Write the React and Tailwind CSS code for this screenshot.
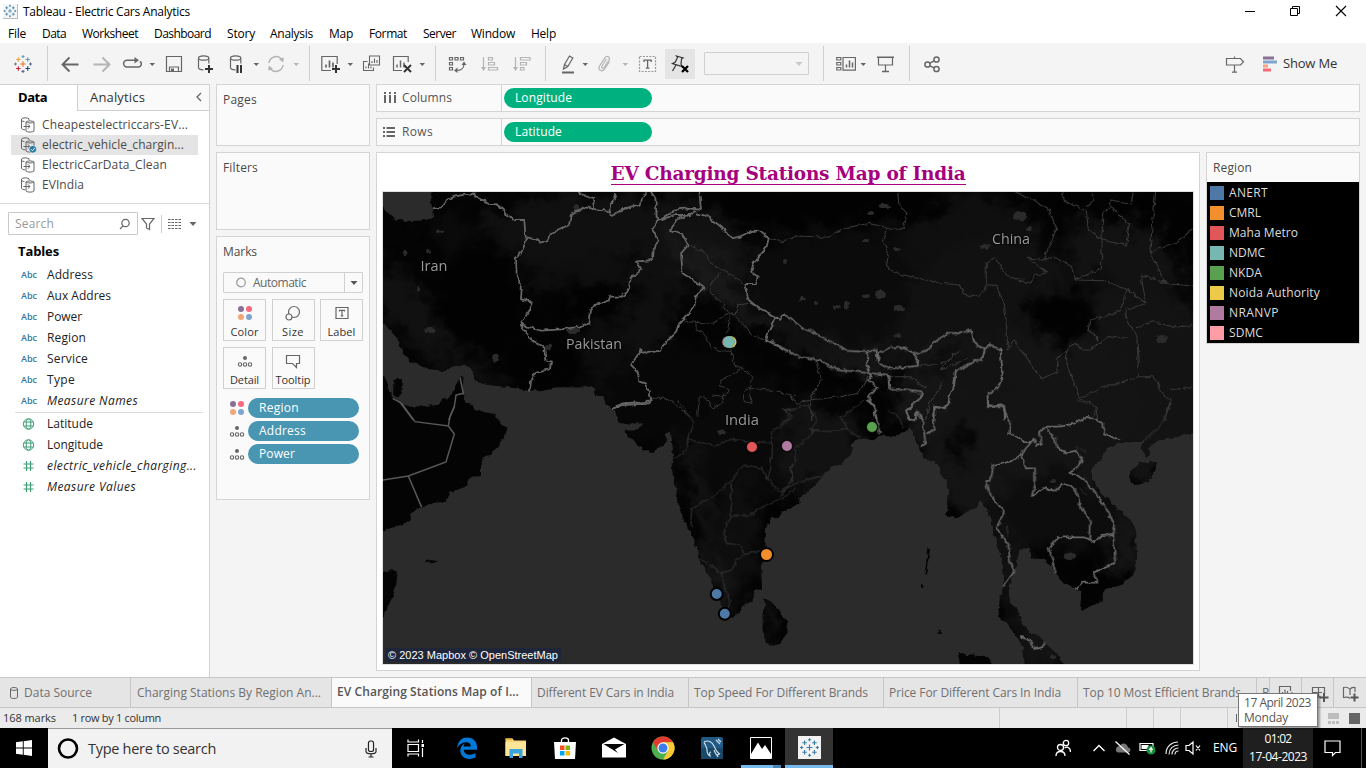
import React, { useLayoutEffect, useRef } from "react";

/* Single-line label that spreads its letters over a given width. */
function T({ w, className = "", children }) {
  const ref = useRef(null);
  useLayoutEffect(() => {
    const el = ref.current;
    el.style.letterSpacing = "0px";
    const natural = el.getBoundingClientRect().width;
    el.style.letterSpacing = (w - natural) / el.textContent.length + "px";
  }, [w, children]);
  return (
    <span ref={ref} className={"inline-block shrink-0 whitespace-pre " + className}>
      {children}
    </span>
  );
}

function Svg({ w = 20, h = 20, className = "", children, ...rest }) {
  return (
    <svg width={w} height={h} viewBox={`0 0 ${w} ${h}`} fill="none" stroke="#666" strokeWidth="1.2" className={"shrink-0 " + className} {...rest}>
      {children}
    </svg>
  );
}

const Caret = ({ className = "", color = "#666" }) => (
  <Svg w={8} h={20} className={className}>
    <path d="M1.500 9h5.500L4.250 12z" fill={color} stroke="none" />
  </Svg>
);
const Sep = ({ className = "" }) => <div className={"h-[35px] w-px shrink-0 bg-[#d0d0d0] " + className} />;

const plus = (x, y, r) => `M${x - r} ${y}h${2 * r}M${x} ${y - r}v${2 * r}`;

function TableauLogo({ s = 20, mono = false, className = "" }) {
  const c = (v) => (mono ? "#3d7fa8" : v);
  return (
    <svg width={s} height={s} viewBox="0 0 20 20" fill="none" strokeWidth="1.1" className={"shrink-0 " + className}>
      <path d={plus(10, 10, 2.8)} stroke={c("#e8762c")} />
      <path d={plus(5.3, 5.5, 2.2)} stroke={c("#e8a04c")} />
      <path d={plus(14.7, 5.5, 2.2)} stroke={c("#7199a6")} />
      <path d={plus(5.3, 14.5, 2.2)} stroke={c("#c72035")} />
      <path d={plus(14.7, 14.5, 2.2)} stroke={c("#1f457e")} />
      <path d={plus(10, 2.6, 1.5)} stroke={c("#6f9fc4")} />
      <path d={plus(10, 17.4, 1.5)} stroke={c("#5b6591")} />
      <path d={plus(2.5, 10, 1.5)} stroke={c("#59879b")} />
      <path d={plus(17.5, 10, 1.5)} stroke={c("#5b6591")} />
    </svg>
  );
}

function TitleBar() {
  return (
    <div className="flex h-[23px] items-center bg-white text-[12px] text-black">
      <div className="ml-[3px] flex h-[15px] w-[15px] items-center justify-center border-r border-b border-[#bbb] bg-[#f6f6f6]">
        <TableauLogo s={14} mono />
      </div>
      <T w={167} className="ml-[5px]">Tableau - Electric Cars Analytics</T>
      <div className="ml-auto flex items-center pr-[19px]">
        <Svg w={11} h={20}><path d="M0 9.500h10" stroke="#000" strokeWidth="1" /></Svg>
        <Svg w={12} h={20} className="ml-[34px]"><path d="M.5 6.500h7v7h-7zM2.500 6.500v-2h7v7h-2" stroke="#000" strokeWidth="1" /></Svg>
        <Svg w={12} h={20} className="ml-[33px]"><path d="M1 4l10 10M11 4L1 14" stroke="#000" strokeWidth="1.1" /></Svg>
      </div>
    </div>
  );
}

function MenuBar() {
  return (
    <div className="flex h-[20px] items-center bg-white pt-[2px] pl-[8px] text-[12px] text-black">
      <T w={18}>File</T>
      <T w={24} className="ml-[16px]">Data</T>
      <T w={56} className="ml-[16px]">Worksheet</T>
      <T w={57} className="ml-[16px]">Dashboard</T>
      <T w={28} className="ml-[16px]">Story</T>
      <T w={43} className="ml-[15px]">Analysis</T>
      <T w={24} className="ml-[16px]">Map</T>
      <T w={38} className="ml-[16px]">Format</T>
      <T w={33} className="ml-[16px]">Server</T>
      <T w={44} className="ml-[15px]">Window</T>
      <T w={25} className="ml-[16px]">Help</T>
    </div>
  );
}

const bars = "M6 13.500v-3M9.500 13.500v-7M13 13.500v-5";
const Cyl = () => <path d="M2.500 4v9.500c0 1.300 2.300 2.300 5 2.300M12.800 4v5.500M2.500 4c0-1.300 2.300-2.200 5.100-2.200s5.200.9 5.200 2.200-2.300 2.200-5.200 2.200S2.500 5.300 2.500 4z" />;

function Toolbar() {
  return (
    <div className="flex h-[41px] items-center bg-[#f4f4f4] pl-[13px]">
      <TableauLogo />
      <Sep className="ml-[14px]" />
      <Svg className="ml-[12px]" strokeWidth="1.900"><path d="M2.500 10.500h16M9.500 3.500l-7 7 7 7" /></Svg>
      <Svg className="ml-[12px]" stroke="#b4b4b4" strokeWidth="1.900"><path d="M1.500 10.500h16M10.500 3.500l7 7-7 7" /></Svg>
      <Svg className="ml-[10px]" strokeWidth="1.500"><path d="M9 13H5a3.400 3.400 0 010-6.800h9M8 13h8.500a3 3 0 001.500-5.500" /><path d="M12.500 3l4.500 3.200-4.500 3.200z" fill="#666" stroke="none" /></Svg>
      <Caret className="ml-[6px]" />
      <Svg className="ml-[8px]"><path d="M2.500 2.500h15v15h-15zM5.500 17.500v-4.500h9v4.500" /><path d="M7 14.500h3v3H7z" fill="#666" stroke="none" /></Svg>
      <Svg className="ml-[12px]"><Cyl /><path d="M13 11v8M9 15h8" stroke="#333" strokeWidth="2" /></Svg>
      <Svg className="ml-[10px]"><g transform="translate(2 0)"><Cyl /></g><path d="M11.500 11v8M15 11v8" stroke="#333" strokeWidth="2" /></Svg>
      <Caret className="ml-[6px]" />
      <Svg className="ml-[6px]" stroke="#b4b4b4" strokeWidth="1.500"><path d="M3 9a7.200 7.200 0 0112.500-4M17 11a7.200 7.200 0 01-12.500 4" /><path d="M17 8.500l1-5-5 1.500zM3 11.500l-1 5 5-1.500z" fill="#b4b4b4" stroke="none" /></Svg>
      <Caret className="ml-[6px]" color="#b4b4b4" />
      <Sep className="ml-[9px]" />
      <Svg className="ml-[11px]"><path d="M10 16.500H.8v-14h15.400V10" /><path d={bars} transform="translate(-1 0)" strokeWidth="1.700" /><path d="M15 11v8M11 15h8" stroke="#333" strokeWidth="2" /></Svg>
      <Caret className="ml-[5px]" />
      <Svg className="ml-[8px]" strokeWidth="1.100"><path d="M7.500 2h10v9h-10zM10 9V7M12.500 9V4.500M15 9V6M5.500 7.500H1.500v9h10v-3M4 14.500v-2M6.500 14.500v-5M9 14.500v-2" /></Svg>
      <Svg className="ml-[10px]"><path d="M10 16.500H1.500v-14h14.700V8" /><path d={bars} transform="translate(-1 0)" strokeWidth="1.500" /><path d="M12 11l7 7M19 11l-7 7" stroke="#333" strokeWidth="2" /></Svg>
      <Caret className="ml-[6px]" />
      <Sep className="ml-[9px]" />
      <Svg className="ml-[11px]"><path d="M2.500 3.500h3v2.500h-3zM8 3.500h3v2.500H8zM13.500 3.500h3v2.500h-3zM2.500 8.500h3v2.500h-3zM2.500 13.500h3v2.500h-3zM17 10c0 4-3 6.500-7.500 6.500" /><path d="M14.500 11l2.500-3.500 2.500 3.500zM10.500 13.500l-3.500 3 3.500 2.500z" fill="#666" stroke="none" /></Svg>
      <Svg className="ml-[13px]" stroke="#b4b4b4"><path d="M3.500 3v12M8.500 3.500h4v2.500h-4zM8.500 8.500h6v2.500h-6zM8.500 13.500h9V16h-9z" /><path d="M1 13l2.500 4L6 13z" fill="#b4b4b4" stroke="none" /></Svg>
      <Svg className="ml-[12px]" stroke="#b4b4b4"><path d="M3.500 3v12M8.500 3.500h9.500v2.500H8.500zM8.500 8.500h6v2.500h-6zM8.500 13.500h3.500V16H8.500z" /><path d="M1 13l2.500 4L6 13z" fill="#b4b4b4" stroke="none" /></Svg>
      <Sep className="ml-[13px]" />
      <Svg className="ml-[12px]"><path d="M5.500 15l1-4.500 5-8.500 3.300 2-5 8.500zM6.500 10.500l3.500 2M5.500 15l4.300-2.500" /><path d="M4 18.500h12" strokeWidth="2" /></Svg>
      <Caret className="ml-[3px]" />
      <Svg className="ml-[6px]" stroke="#b4b4b4"><path d="M11.500 5L7 12c-1.200 2.200 1 3 2 1.500L14 6c1.600-3-2-5-4-2.300L4.500 12c-2 4 2.500 6.500 5 3.200L14.500 7.500" /></Svg>
      <Caret className="ml-[6px]" color="#b4b4b4" />
      <Svg className="ml-[9px]"><path d="M1.500 2.500h16v15h-16z" stroke="#999" strokeDasharray="2 1.300" /><path d="M6 8V6.200h7.200V8M9.600 6.200v8M7.800 14.200h3.600" strokeWidth="1.300" /></Svg>
      <div className="ml-[7px] flex h-[30px] w-[30px] shrink-0 items-center justify-center bg-[#e4e4e4]">
        <Svg><path d="M6.500 2l6.500 2-1.500 1-.5 5 1 2.500-9.500-3 2.800-1.500L7.500 3.500zM6 11l-3.500 6" stroke="#333" /><path d="M12 12l6 6M18 12l-6 6" stroke="#000" strokeWidth="2.300" /></Svg>
      </div>
      <div className="ml-[9px] flex h-[23px] w-[105px] shrink-0 items-center justify-end rounded-[1px] border border-[#d0d0d0] pr-[5px]">
        <Svg w={8} h={20}><path d="M.5 8h7L4 12z" fill="#c8c8c8" stroke="none" /></Svg>
      </div>
      <Sep className="ml-[14px]" />
      <Svg className="ml-[12px]"><path d="M.8 3.500h4V6h-4zM.8 8.500h4V11h-4zM.8 13.500h4V16h-4zM7 3.500h12.400v12.700H7z" /><path d="M10.500 13.500v-3M13.500 13.500v-7M16.500 13.500v-5" strokeWidth="1.500" /></Svg>
      <Caret className="ml-[3px]" />
      <Svg className="ml-[9px]"><path d="M2.500 3v8h14V3M9.500 11v6.500" /><path d="M1 3.200h17M6 17.500h7" strokeWidth="1.600" /></Svg>
      <Sep className="ml-[13px]" />
      <Svg className="ml-[12px]" strokeWidth="1.500"><circle cx="5.500" cy="10.500" r="2.600" /><circle cx="14.500" cy="5.500" r="2.600" /><circle cx="14.500" cy="15" r="2.600" /><path d="M8 9.200l4-2.300M8 11.800l4 2" /></Svg>
      <Svg className="ml-[283px]"><path d="M1.500 4.500h14l3 3.300-3 3.200h-14zM9.500 2.500v2M9.500 11v7.500M7 18.200h5" /></Svg>
      <Svg w={16} className="ml-[18px]" stroke="none"><path d="M0 2.500h11v3H0z" fill="#8b7096" /><path d="M0 6.500h14v3H0z" fill="#7fa5cf" /><path d="M0 10.500h5v3H0z" fill="#f2a57a" /><path d="M0 14.500h8v3H0z" fill="#f5697b" /></Svg>
      <T w={54} className="ml-[4px] text-[13px] text-[#333]">Show Me</T>
    </div>
  );
}

const DataIcon = ({ on }) => (
  <Svg w={17} h={18} strokeWidth="1" className="mr-[5px]">
    <path d="M9 4V2.800C7.500 1.500 2.500 1.500 1.500 3v9.500c1 1 2 1.200 3.500 1.300M1.500 4.500c1 .8 2 1 3 1.100M6 6v9c1.500 1.500 6.500 1.500 8 0V6c-1.500 1.300-6.500 1.300-8 0 1.500-1.500 6.500-1.500 8 0M3.500 10.500h6.500M7.800 8.300l2.200 2.200-2.200 2.200" />
    {on && <g><circle cx="12.800" cy="13.300" r="3.800" fill="#2a7ba3" stroke="#fff" strokeWidth=".6" /><path d="M11 13.300l1.400 1.400 2.400-2.600" stroke="#fff" /></g>}
  </Svg>
);

const Field = ({ icon, w, italic, children }) => (
  <div className={"flex h-[21px] items-center text-[12px] text-[#222] " + (italic ? "italic" : "")}>
    <div className="flex w-[29px] shrink-0 items-center pl-[3px]">{icon}</div>
    <T w={w}>{children}</T>
  </div>
);
const Abc = () => <T w={16} className="text-[9px] font-semibold text-[#35789c] not-italic">Abc</T>;
const Globe = () => <Svg w={16} h={12} stroke="#3f9e77" strokeWidth="1"><ellipse cx="7.500" cy="6" rx="5.200" ry="5.200" /><ellipse cx="7.500" cy="6" rx="2.300" ry="5.200" /><path d="M3 4h9M3 8h9" /></Svg>;
const Hash = () => <Svg w={16} h={12} stroke="#3f9e77"><path d="M5.500 1v10M9.500 1v10M2.500 4h10M2.500 8h10" /></Svg>;

function DataPane() {
  return (
    <div className="flex w-[210px] shrink-0 flex-col border-t border-r border-[#d0d0d0] bg-white">
      <div className="flex h-[26px] shrink-0 text-[13px]">
        <div className="w-[77px] shrink-0 pt-[3px] pl-[18px] font-bold text-black"><T w={29}>Data</T></div>
        <div className="flex flex-1 items-center justify-between border-b border-l border-[#d0d0d0] bg-[#fafafa] pr-[6px] pl-[12px] text-[#333]">
          <T w={55}>Analytics</T>
          <Svg w={8} h={12}><path d="M6 1L2 5l4 4" strokeWidth="1.300" /></Svg>
        </div>
      </div>
      <div className="mt-[4px] h-[89px] shrink-0 border-b border-[#dcdcdc] text-[12px] text-[#4a4a4a]">
        <div className="flex h-[20px] items-center pl-[20px]"><DataIcon /><T w={146}>Cheapestelectriccars-EV...</T></div>
        <div className="ml-[11px] flex h-[20px] w-[187px] items-center bg-[#e4e4e4] pl-[9px]"><DataIcon on /><T w={142}>electric_vehicle_chargin...</T></div>
        <div className="flex h-[20px] items-center pl-[20px]"><DataIcon /><T w={125}>ElectricCarData_Clean</T></div>
        <div className="flex h-[20px] items-center pl-[20px]"><DataIcon /><T w={42}>EVIndia</T></div>
      </div>
      <div className="mt-[8px] flex shrink-0 items-center pl-[8px]">
        <div className="flex h-[23px] w-[130px] items-center justify-between rounded-[1px] border border-[#c8c8c8] pr-[6px] pl-[6px] text-[12px] text-[#999]">
          <T w={39}>Search</T>
          <Svg w={12} h={12}><circle cx="6.500" cy="5" r="3.700" /><path d="M4 7.800L1 11" /></Svg>
        </div>
        <Svg w={14} h={14} className="ml-[3px]"><path d="M1 1.500h12L8.500 7v5.500l-3-1.500V7z" /></Svg>
        <div className="ml-[6px] h-[18px] w-px bg-[#ccc]" />
        <Svg w={13} h={12} className="ml-[6px]"><path d="M0 1.500h13M0 4.500h13M0 7.500h13M0 10.500h13" strokeDasharray="2.500 1" /></Svg>
        <Svg w={8} h={10} className="ml-[8px]"><path d="M.5 3h7L4 7z" fill="#666" stroke="none" /></Svg>
      </div>
      <div className="mt-[6px] flex h-[22px] shrink-0 items-center pl-[18px] text-[13px] font-bold text-black"><T w={41}>Tables</T></div>
      <div className="mt-[1px] pl-[18px]">
        <Field icon={<Abc />} w={46}>Address</Field>
        <Field icon={<Abc />} w={64}>Aux Addres</Field>
        <Field icon={<Abc />} w={35}>Power</Field>
        <Field icon={<Abc />} w={39}>Region</Field>
        <Field icon={<Abc />} w={41}>Service</Field>
        <Field icon={<Abc />} w={28}>Type</Field>
        <Field icon={<Abc />} w={91} italic>Measure Names</Field>
      </div>
      <div className="mt-px mr-[6px] ml-[15px] h-px shrink-0 bg-[#dcdcdc]" />
      <div className="pl-[18px]">
        <Field icon={<Globe />} w={46}>Latitude</Field>
        <Field icon={<Globe />} w={56}>Longitude</Field>
        <Field icon={<Hash />} w={150} italic>electric_vehicle_charging...</Field>
        <Field icon={<Hash />} w={89} italic>Measure Values</Field>
      </div>
    </div>
  );
}

const ColorDots = ({ className = "" }) => (
  <Svg w={16} h={16} stroke="none" className={className}><circle cx="4" cy="4" r="3" fill="#8b7096" /><circle cx="12" cy="4" r="3" fill="#f8697b" /><circle cx="4" cy="12" r="3" fill="#f2a57a" /><circle cx="12" cy="12" r="3" fill="#7fa5cf" /></Svg>
);
const DetailDots = ({ className = "" }) => (
  <Svg w={16} h={16} strokeWidth="1.100" className={className}><circle cx="8" cy="5" r="2" fill="#666" stroke="none" /><circle cx="3" cy="11.500" r="1.700" /><circle cx="8" cy="11.500" r="1.700" /><circle cx="13" cy="11.500" r="1.700" /></Svg>
);
const MarkButton = ({ icon, w, children }) => (
  <div className="flex h-[42px] w-[43px] flex-col items-center justify-between border border-[#d0d0d0] pt-[5px] text-[11px] leading-[16px] text-[#333]">
    {icon}
    <T w={w}>{children}</T>
  </div>
);
const Pill = ({ icon, w, children }) => (
  <div className="flex h-[20px] items-center">
    {icon}
    <div className="ml-[3px] flex h-[20px] w-[111px] items-center rounded-full bg-[#4996b2] pl-[11px] text-[12px] text-white"><T w={w}>{children}</T></div>
  </div>
);

function Cards() {
  const card = "border border-[#d4d4d4] bg-[#fafafa] pl-[6px] text-[12px] text-[#4a4a4a] ";
  return (
    <div className="ml-[6px] flex w-[154px] shrink-0 flex-col gap-[6px]">
      <div className={card + "h-[62px] pt-[6px]"}><T w={34}>Pages</T></div>
      <div className={card + "h-[78px] pt-[6px]"}><T w={35}>Filters</T></div>
      <div className={card + "h-[264px] pt-[6px]"}>
        <T w={34}>Marks</T>
        <div className="mt-[11px] flex h-[21px] w-[140px] items-center rounded-[1px] border border-[#d0d0d0] pl-[12px] text-[12px] text-[#666]">
          <Svg w={11} h={11}><circle cx="5" cy="5.500" r="4.300" stroke="#999" /></Svg>
          <T w={53} className="ml-[6px]">Automatic</T>
          <div className="ml-auto flex h-full w-[18px] items-center justify-center border-l border-[#d0d0d0]"><Svg w={8} h={8}><path d="M.5 2h7L4 6z" fill="#555" stroke="none" /></Svg></div>
        </div>
        <div className="mt-[6px] grid w-[140px] grid-cols-[43px_43px_43px] gap-x-[5.500px] gap-y-[6px]">
          <MarkButton icon={<ColorDots />} w={28}>Color</MarkButton>
          <MarkButton icon={<Svg w={16} h={16}><circle cx="9" cy="7" r="5.500" /><circle cx="4" cy="12" r="3" fill="#fafafa" /></Svg>} w={22}>Size</MarkButton>
          <MarkButton icon={<Svg w={16} h={16}><path d="M2 2.500h12v11H2z" /><path d="M5.500 6.500V5.300h5v1.200M8 5.300v5.500M6.700 10.800h2.600" /></Svg>} w={28}>Label</MarkButton>
          <MarkButton icon={<DetailDots />} w={29}>Detail</MarkButton>
          <MarkButton icon={<Svg w={16} h={16}><path d="M1.500 2.500h13v8h-3v4l-4-4h-6z" /></Svg>} w={35}>Tooltip</MarkButton>
        </div>
        <div className="mt-[9px] ml-[6px] flex flex-col gap-[3px]">
          <Pill icon={<ColorDots />} w={40}>Region</Pill>
          <Pill icon={<DetailDots />} w={47}>Address</Pill>
          <Pill icon={<DetailDots />} w={36}>Power</Pill>
        </div>
      </div>
    </div>
  );
}

function Shelf({ icon, label, lw, pill, pw }) {
  return (
    <div className="flex h-[28px] items-center border border-[#d4d4d4] bg-[#fafafa] text-[12px]">
      <div className="flex h-full w-[125px] shrink-0 items-center border-r border-[#d4d4d4] pl-[6px] text-[#555]">
        {icon}
        <T w={lw} className="ml-[5px]">{label}</T>
      </div>
      <div className="ml-[2px] flex h-[20px] w-[148px] items-center rounded-full bg-[#00b180] pl-[11px] text-white"><T w={pw}>{pill}</T></div>
    </div>
  );
}

const N = "translate(376 150) scale(.33333)";
const NE = "translate(780 150) scale(.37372 .33333)";
const SW = "translate(376 400) scale(.33333)";
const SE = "translate(780 400) scale(.33333)";

const BORDERS = [
  [N, "M170 178L185 176L200 165L215 148L235 140L265 134L280 137L295 130L300 142L325 152L345 160L360 163L380 176L385 188L405 200L415 210L445 210L448 255L450 262L480 268L495 278L515 270L522 250L550 240L580 225L585 190L612 182L620 170L645 176L690 182L707 195L735 182L765 170L790 165L800 140L812 126M600 126L625 135L655 145L650 176M715 126L720 140L702 165L700 190M825 126L838 145L842 200L850 212L900 178L940 175L975 180L970 126M845 212L900 195L940 195L960 182M960 190L985 195L1000 205L1025 222L1045 240L1070 265L1095 258L1130 242L1150 243L1178 265L1172 290L1150 315L1130 345L1125 365L1145 380L1140 402L1105 402M845 212L830 240L845 270L840 290L830 305L828 330L780 335L795 355L790 370L765 378L760 410L750 430L735 440L700 440L695 455L660 460L645 480L640 520L610 530L555 538L495 542L455 530L433 520M450 262L440 300L420 325L422 375L435 405L432 448L470 455L465 475L433 520L445 540L465 570L505 595L508 630L525 635L522 658L480 665L465 690L462 724M940 195L900 210L882 240L920 255L937 285L915 310L920 370L950 390L985 412L960 435L955 470L935 495L910 520L900 545L870 575L850 602L810 610L795 600L765 645L785 665L790 695L810 700L825 745L820 760L740 765L712 775M1105 402L1118 450L1150 475L1200 500L1180 540L1170 570L1200 585L1222 600M1200 500L1212 510"],
  [NE, "M0 510L10 493L30 505L60 535L85 545L110 560L130 572L160 590L175 602L235 606L258 600L262 640L295 655L330 652L368 648L370 628L358 612L395 600L415 575L450 548L480 550L510 540L515 570L530 585L548 598L560 582L590 600L597 690L580 715L555 735L557 770L600 768L602 810M0 590L50 620L110 630L130 650L180 662L240 670L232 635L235 606M262 635L265 608L290 595L315 590L345 600L358 612M548 598L540 630L525 630L470 665L465 710L440 775L412 770L413 810M240 670L290 675L292 715L345 722L380 728L375 745L350 770L338 785L350 810M240 670L245 685L235 690L262 715L235 740L250 765L258 810M360 810L362 785L378 790L380 810"],
  [SW, "M712 25L740 10L820 5"],
  [SE, "M262 0L282 15L290 60L300 100M415 0L380 30L385 55L400 65L412 35L430 75L436 130L420 140M508 0L495 28L465 20L462 85L440 105M620 0L630 22L665 15L690 65L688 98L720 118L745 128L760 118L770 135L785 130L780 95L800 80L840 80L885 70L920 50L970 70L972 100L1020 122M800 88L825 115L830 145L860 158L890 152L905 180L895 200L868 215L915 240L970 310L1005 375L1000 405L1006 490L940 518L952 548L910 548L885 567M760 118L722 165L690 185L640 198L632 240L615 245L630 285L660 320L672 340L650 385L685 435L690 485L703 515L668 562M722 165L738 205L765 205L765 255L755 288L795 262L822 272L845 250L875 258L895 290L900 320L930 360L928 415M1000 405L965 408L945 428L915 412L835 412L806 445L828 520M722 710L750 720L760 748L785 742L797 728"],
];

/* Surveyed straight-line borders of the Arabian peninsula. */
const STRAIGHT = [
  [N, "M50 745L72 757L112 810M218 810L235 770L240 735L262 730L252 682"],
  [SW, "M77 10L117 65L217 78L222 50L235 20M217 78L235 102L210 186L97 228L21 240M97 228L137 322"],
];

const PROVINCES = [
  [N, "M937 285L990 310L1010 345L1060 370L1105 402M1178 265L1215 272M1030 370L1000 405L1005 430L1040 460L1060 490L1080 495L1085 465L1120 460M925 515L960 517L1010 520L1040 500L1055 490M960 520L960 540L985 550L1005 590L1030 605L1065 600L1075 645L1100 655L1040 690L1030 705L1060 720L1050 740L1010 735M1100 655L1130 680L1125 710L1100 730L1105 755L1125 760L1120 715L1200 722L1260 740M1060 490L1055 550M1080 500L1130 555L1165 570M825 745L870 745L905 770L950 808M965 800L970 740L1000 750L1005 775L1040 760L1045 730"],
  [NE, "M315 126L318 160L340 190L330 235L285 235L240 220L200 228L165 235L130 262L45 258L0 278M285 235L275 270L290 310L285 350L310 370L370 385L430 400L480 405L490 430L520 440L550 425L552 400L580 410L600 460L608 550L608 600L625 570L660 625L700 685L740 670L745 620L790 580L810 600L830 600L880 560L930 565M552 400L552 340L575 325L590 350L610 380L670 400L685 375L718 368L665 325L705 328L740 235L720 180L680 150L630 126M705 328L740 320L780 350L790 390L860 355L862 270L825 240L820 185L790 168L760 150L755 126M820 170L840 150L835 126M862 270L925 285L935 220L905 195L885 170L860 190L865 230L858 270M885 170L885 150L940 160L945 126M1005 126L990 300L1030 400L1070 405L1105 408M990 305L1060 280L1105 235M790 390L870 392L930 420L980 460L925 480L930 515L955 560L960 680L870 710L800 745L845 770L850 810M770 600L765 640L795 720L800 745M960 680L1000 680L1030 740L1045 750L1030 810M1045 720L1105 710M930 415L910 480L870 500L830 510L822 540L850 560L850 575M955 530L1000 515L1050 530L1105 528M980 460L965 375L1030 395M95 630L110 690L78 750L160 740L210 730L235 680M0 720L50 760L80 750L85 810M290 680L350 680L390 715M370 648L430 640L480 605M435 700L400 760L390 810M465 610L430 660L500 625"],
  [SW, "M905 0L952 65L935 115L960 125L1020 138L1065 118L1130 125L1185 128L1190 95L1240 55L1225 30L1260 28M935 115L930 150L895 178M1185 128L1185 200L1175 238L1210 275L1250 245L1245 190M948 325L1000 295L1060 250L1080 225L1105 195L1160 205L1175 238M945 385L945 350L948 325M1065 250L1065 350L1120 345L1180 310L1230 290L1260 262M1065 350L1045 385L1050 430L1090 435L1105 460L1165 455M1105 465L1080 480L1070 510L1035 518L970 475M1035 518L1045 560L1062 600L1055 640"],
  [SE, "M1175 0L1150 60L1120 100L1085 125M890 0L945 18L945 45L920 55M0 85L35 50L15 30L85 15L110 60L90 110L45 145L50 190L30 200L38 240L0 290M90 90L150 95L200 85L240 115M180 50L215 30L255 0M180 50L205 90M0 275L60 245L130 225M325 30L360 55L370 85M890 140L920 155M900 265L920 285M680 380L685 410"],
];

const LAND = [
  [N, "M21 515L45 545L60 560L75 590L85 615L110 640L135 645L160 660L200 665L230 650L265 640L285 655L292 680L300 695L340 705L400 712L460 722L500 720L540 712L580 712L620 712L650 706L660 735L690 745L695 765L715 775L728 820L1260 820L1260 120L15 120L15 515Z M15 670L30 690L48 740L75 760L95 772L150 768L190 765L220 745L235 715L250 680L262 680L260 730L275 770L290 785L340 795L355 820L15 820Z M52 690L65 680L78 692L76 730L65 745L52 735Z"],
  [NE, "M-40 120H1120V820H-40Z"],
  [SW, "M15 0L50 0L75 12L110 22L150 18L185 14L200 -5L262 -5L290 22L320 35L355 42L375 70L393 88L385 115L365 140L345 165L325 168L315 200L315 228L280 232L268 260L240 272L222 275L210 305L175 308L140 322L105 340L100 362L60 380L15 394Z M15 525L45 508L66 512L60 560L50 590L35 620L15 655Z M148 484L165 480L186 484L168 490Z M684 -5L690 12L715 25L728 28L730 50L760 70L790 65L805 55L800 75L775 92L745 92L770 120L800 150L825 155L850 145L868 125L870 100L885 95L888 125L895 175L887 190L892 240L905 290L915 340L935 380L950 410L962 450L970 480L990 510L1010 550L1028 600L1045 640L1070 655L1090 640L1095 620L1125 605L1138 570L1158 568L1155 500L1160 485L1180 465L1168 440L1170 390L1185 355L1210 350L1215 335L1250 320L1270 310V-5Z M1160 592L1185 605L1210 630L1232 665L1235 700L1215 730L1185 738L1170 725L1160 690L1160 640L1172 610Z"],
  [SE, "M-20 -10L-20 335L35 325L40 305L80 280L100 260L130 225L150 205L185 190L215 160L220 125L250 115L280 118L300 105L330 110L375 100L385 80L400 95L410 130L420 150L440 180L475 190L480 215L495 235L508 270L500 345L525 355L550 345L570 330L592 320L597 298L615 320L630 350L640 400L655 440L665 480L668 520L672 560L660 590L655 650L680 670L710 710L730 740L735 800L850 800L840 770L800 735L775 705L745 700L725 670L710 625L690 610L685 570L700 520L712 480L718 445L750 445L755 475L790 478L815 495L830 525L850 550L875 562L905 575L900 632L940 615L965 600L975 570L1010 560L1060 525L1070 470L1068 400L1050 360L1000 315L960 275L935 235L935 205L960 180L975 150L1020 125L1060 125L1090 120L1085 150L1100 170L1110 165L1105 145L1120 130L1150 118L1200 108L1250 95V-10Z M1050 215L1080 190L1110 185L1135 188L1120 220L1105 245L1075 255L1052 245Z M535 755L560 765L600 768L625 775L638 800L545 800Z M445 445L450 447L444 485L438 525L434 520L440 480Z M426 552h6v8h-6zM476 692h6v10h-6z"],
];

/* x, y, rx, ry, rotation, fill */
const RELIEF = [
  [560, 235, 100, 40, -10, "#101010"], [590, 285, 60, 25, 0, "#0e0e0e"], [480, 250, 60, 20, 30, "#0a0a0a"], [445, 345, 70, 22, 35, "#0f0f0f"], [400, 300, 50, 20, 50, "#111111"],
  [610, 345, 35, 60, 10, "#0d0d0d"], [655, 290, 26, 70, 15, "#0f0f0f"], [700, 240, 60, 34, 30, "#111111"], [715, 280, 60, 16, 42, "#191919"], [790, 330, 110, 14, 27, "#181818"],
  [690, 400, 90, 55, 0, "#070707"], [760, 440, 70, 60, 0, "#090909"], [860, 345, 90, 16, 8, "#131313"], [880, 280, 140, 65, 0, "#0b0b0b"], [970, 235, 70, 45, 0, "#0f0f0f"],
  [1000, 330, 100, 90, 10, "#111111"], [1120, 380, 110, 90, 0, "#131313"], [1050, 400, 90, 70, 0, "#141414"], [960, 420, 50, 90, 5, "#131313"], [925, 390, 24, 50, 15, "#151515"],
  [1010, 470, 90, 50, 0, "#141414"], [1130, 260, 70, 35, 20, "#121212"], [820, 450, 45, 45, 0, "#121212"], [700, 500, 10, 70, -15, "#131313"], [720, 580, 10, 40, -15, "#171717"],
  [740, 530, 20, 60, 0, "#0e0e0e"], [1115, 520, 22, 60, -20, "#151515"], [1010, 560, 20, 70, -10, "#111111"], [770, 625, 8, 14, 0, "#141414"], [1060, 510, 60, 40, 0, "#0d0d0d"],
  [1040, 640, 30, 30, 0, "#131313"], [1140, 472, 14, 12, 0, "#141414"],
];
const BASINS = [
  [830, 205, 120, 24, 0], [590, 300, 50, 14, 0], [480, 300, 40, 60, 0], [1060, 315, 32, 28, 0], [960, 445, 8, 22, 0], [1095, 575, 20, 15, 0], [1040, 203, 40, 8, 0],
  [850, 385, 45, 8, 12], [550, 365, 40, 18, 0], [1140, 205, 30, 16, 0], [1185, 240, 14, 50, 0], [945, 360, 22, 4, -35],
];
const LAKES = [
  [1020, 216, 7, 5], [1029, 229, 3, 2], [985, 247, 5, 3], [884, 206, 6, 2], [871, 213, 3, 2], [899, 308, 5, 3], [880, 294, 5, 4], [866, 296, 4, 2], [836, 307, 4, 2], [847, 305, 2, 4], [803, 299, 3, 2], [816, 304, 2, 2],
  [897, 249, 3, 2], [866, 241, 3, 2], [405, 253, 3, 3], [440, 231, 4, 1.5], [429, 252, 2, 2], [495, 358, 3, 4], [430, 330, 6, 2], [548, 347, 4, 3], [573, 331, 7, 3], [576, 208, 3, 3], [898, 336, 3, 2],
  [1070, 556, 6, 3], [1053, 481, 3, 2], [1162, 339, 6, 4], [1163, 282, 4, 2], [721, 432, 4, 2], [1053, 657, 3, 2], [785, 261, 2, 2], [418, 289, 2, 3],
];
const MARKS = [
  [752, 447, "#e15759"], [787, 446, "#b07aa1"], [872, 427, "#59a14f"],
];

function IndiaMap() {
  return (
    <svg width="810" height="472" viewBox="383 192 810 472" className="block" fill="none" fontFamily="'Open Sans', sans-serif">
      <defs>
        <filter id="rough" filterUnits="userSpaceOnUse" x="370" y="180" width="840" height="500" colorInterpolationFilters="sRGB">
          <feTurbulence type="fractalNoise" baseFrequency=".16" numOctaves="2" seed="4" />
          <feDisplacementMap in="SourceGraphic" scale="5" xChannelSelector="R" yChannelSelector="G" />
        </filter>
        <filter id="relief" filterUnits="userSpaceOnUse" x="370" y="180" width="840" height="500" colorInterpolationFilters="sRGB">
          <feGaussianBlur in="SourceGraphic" stdDeviation="7" result="b" />
          <feTurbulence type="fractalNoise" baseFrequency=".05" numOctaves="4" seed="9" result="n" />
          <feDisplacementMap in="b" in2="n" scale="45" xChannelSelector="R" yChannelSelector="G" />
        </filter>
        <clipPath id="land">
          {LAND.map(([t, d], i) => <path key={i} d={d} transform={t} />)}
        </clipPath>
      </defs>
      <rect x="383" y="192" width="810" height="472" fill="#2b2b2b" />
      <g filter="url(#rough)">
        {LAND.map(([t, d], i) => <path key={i} d={d} transform={t} fill="#040404" />)}
        <g clipPath="url(#land)">
          <g filter="url(#relief)">
            {RELIEF.map(([x, y, rx, ry, a, f], i) => <ellipse key={i} cx={x} cy={y} rx={rx} ry={ry} fill={f} transform={`rotate(${a} ${x} ${y})`} />)}
            {BASINS.map(([x, y, rx, ry, a], i) => <ellipse key={i} cx={x} cy={y} rx={rx} ry={ry} fill="#020202" transform={`rotate(${a} ${x} ${y})`} />)}
          </g>
        </g>
        <path transform={N} d="M15 120L167 120L165 150L168 180L172 205L130 212L90 213L60 208L35 190L15 165Z" fill="#2b2b2b" />
        {LAKES.map(([x, y, rx, ry], i) => <ellipse key={i} cx={x} cy={y} rx={rx} ry={ry} fill="#2b2b2b" />)}
      </g>
      <g filter="url(#rough)" strokeLinejoin="round">
        {PROVINCES.map(([t, d], i) => <path key={i} d={d} transform={t} stroke="#383838" strokeWidth="3" />)}
        {BORDERS.map(([t, d], i) => <path key={i} d={d} transform={t} stroke="#666" strokeWidth="5.300" />)}
      </g>
      {STRAIGHT.map(([t, d], i) => <path key={i} d={d} transform={t} stroke="#585858" strokeWidth="4.500" />)}
      <g fill="#9a9a9a" fontSize="14" fontWeight="500" stroke="#000" strokeOpacity=".5" strokeWidth="2" paintOrder="stroke">
        <text x="420.500" y="271" textLength="27" lengthAdjust="spacingAndGlyphs">Iran</text>
        <text x="566" y="348.500" textLength="56" lengthAdjust="spacingAndGlyphs">Pakistan</text>
        <text x="725" y="425" textLength="34" lengthAdjust="spacingAndGlyphs">India</text>
        <text x="992" y="243.500" textLength="38" lengthAdjust="spacingAndGlyphs">China</text>
      </g>
      <circle cx="728" cy="342" r="6" fill="#ff9da7" stroke="#000" strokeOpacity=".6" />
      <circle cx="730.500" cy="342" r="6" fill="#edc948" />
      <circle cx="729" cy="342" r="6" fill="#76b7b2" stroke="#10201f" strokeOpacity=".3" strokeWidth=".5" />
      {MARKS.map(([x, y, c]) => <circle key={c} cx={x} cy={y} r="5.700" fill={c} stroke="#000" strokeOpacity=".8" strokeWidth="1.400" />)}
      <g stroke="#000" strokeWidth="2">
        <circle cx="766.500" cy="554.500" r="6.500" fill="#f28e2b" />
        <circle cx="716.700" cy="594" r="6" fill="#4e79a7" />
        <circle cx="724.800" cy="613.700" r="6" fill="#4e79a7" />
      </g>
    </svg>
  );
}

const LEGEND = [
  ["bg-[#4e79a7]", "ANERT", 39], ["bg-[#f28e2b]", "CMRL", 32], ["bg-[#e15759]", "Maha Metro", 69], ["bg-[#76b7b2]", "NDMC", 36],
  ["bg-[#59a14f]", "NKDA", 33], ["bg-[#edc948]", "Noida Authority", 91], ["bg-[#b07aa1]", "NRANVP", 50], ["bg-[#ff9da7]", "SDMC", 34],
];

function Workspace() {
  return (
    <div className="ml-[6px] flex w-[984px] shrink-0 flex-col gap-[6px]">
      <Shelf icon={<Svg w={14} h={14} stroke="none"><path d="M1 1h2v2H1zM6 1h2v2H6zM11 1h2v2h-2zM1 4h2v8H1zM6 4h2v8H6zM11 4h2v8h-2z" fill="#666" /></Svg>} label="Columns" lw={50} pill="Longitude" pw={57} />
      <Shelf icon={<Svg w={14} h={14} stroke="none"><path d="M0 2h2v2H0zM0 6h2v2H0zM0 10h2v2H0zM3.500 2H12v2H3.500zM3.500 6H12v2H3.500zM3.500 10H12v2H3.500z" fill="#666" /></Svg>} label="Rows" lw={31} pill="Latitude" pw={47} />
      <div className="flex items-start gap-[6px]">
        <div className="flex h-[519px] w-[824px] shrink-0 flex-col items-start border border-[#d4d4d4] bg-white pl-[5px]">
          <div className="flex h-[38px] w-[812px] items-center justify-center pt-[4px]">
            <T w={355} className="border-b border-[#a6007f] text-[18.500px] leading-[20px] font-bold text-[#a6007f] [font-family:'DejaVu_Serif',serif]">EV Charging Stations Map of India</T>
          </div>
          <div className="relative h-[474px] w-[812px] border border-[#e0e0e0]">
            <IndiaMap />
            <div className="absolute bottom-[2px] left-[2px] flex h-[14px] w-[176px] items-center bg-[#20263a] pl-[3px] text-[11px] text-white [font-family:'Liberation_Sans',sans-serif]"><T w={170}>© 2023 Mapbox © OpenStreetMap</T></div>
          </div>
        </div>
        <div className="w-[154px] border border-[#d4d4d4] bg-[#fafafa]">
          <div className="flex h-[29px] items-center pl-[6px] text-[12px] text-[#4a4a4a]"><T w={39}>Region</T></div>
          <div className="bg-black pt-px text-[12px] text-[#ddd]">
            {LEGEND.map(([bg, name, w]) => (
              <div key={name} className="flex h-[20px] items-center pl-[3px]">
                <div className={"mr-[5px] h-[14px] w-[14px] " + bg} />
                <T w={w}>{name}</T>
              </div>
            ))}
          </div>
        </div>
      </div>
    </div>
  );
}

const tab = "flex h-full shrink-0 items-center border-r border-[#c6c6c6] pl-[5px] ";
function SheetTabs() {
  return (
    <div className="flex h-[31px] shrink-0 overflow-hidden border-t border-b border-[#c6c6c6] bg-[#e5e5e5] text-[12px] text-[#707070]">
      <div className={tab + "w-[131px]"}>
        <Svg w={10} h={14} className="ml-[4px]" strokeWidth="1"><path d="M1.500 3v8c0 2 7 2 7 0V3c0-2-7-2-7 0 0 1.800 7 1.800 7 0" /></Svg>
        <T w={68} className="ml-[5px]">Data Source</T>
      </div>
      <div className={tab + "w-[201px]"}><T w={184} className="ml-px">Charging Stations By Region An...</T></div>
      <div className={tab + "w-[200px] bg-[#fafafa] pb-[2px] font-semibold text-[#555]"}><T w={182}>EV Charging Stations Map of I...</T></div>
      <div className={tab + "w-[157px]"}><T w={137}>Different EV Cars in India</T></div>
      <div className={tab + "w-[195px]"}><T w={174}>Top Speed For Different Brands</T></div>
      <div className={tab + "w-[194px]"}><T w={172}>Price For Different Cars In India</T></div>
      <div className={tab + "w-[179px]"}><T w={158}>Top 10 Most Efficient Brands</T></div>
      <div className={tab + "w-[13px] overflow-hidden"}>R</div>
      <div className={tab + "w-[32px]"}><Svg className="ml-[2px]"><path d="M9 14.500H2.500v-11h11V8M5.500 12V9M8 12V6.500M10.500 12V8M12 12h6M15 9v6" /></Svg></div>
      <div className={tab + "w-[32px]"}><Svg className="ml-[2px]"><path d="M12 14H3.500V4.500h12V10M3.500 9.500H13M9.500 4.500v9" /><path d="M15.500 10v9M11 14.500h9" stroke="#555" strokeWidth="2" transform="translate(-.5 0)" /></Svg></div>
      <div className="flex items-center pl-[8px]"><Svg><path d="M8 6.500C6.500 4 4 4 1.500 4.500v10c2.500-.5 5-.5 6.500 1M8 6.500c1-2 3-2.300 5-2V9M8 6.500V12" /><path d="M12.500 10.500v8M8.500 14.500h8" stroke="#555" strokeWidth="2" /></Svg></div>
    </div>
  );
}

function StatusBar() {
  const line = "h-full w-px shrink-0 bg-[#cdcdcd] ";
  return (
    <div className="flex h-[20px] shrink-0 items-center bg-[#ebebeb] pl-[3px] text-[11px] text-[#333]">
      <T w={53}>168 marks</T>
      <T w={89} className="ml-[16px]">1 row by 1 column</T>
      <div className={line + "ml-auto"} />
      <div className={line + "ml-[126px]"} />
      <div className={line + "ml-[26px]"} />
      <div className={line + "ml-[26px]"} />
      <div className={line + "ml-[46px]"} />
      <div className="ml-[8px] h-[8px] w-px shrink-0 bg-[#666]" />
      <Svg w={40} h={14} stroke="none" className="mr-px ml-[88px]">
        <path d="M3 2h11v6H3zM3 10h3v3H3zM7 10h3v3H7zM11 10h3v3h-3z" fill="#bdbdbd" />
        <path d="M24 2h11v11H24z" fill="#666" />
      </Svg>
    </div>
  );
}

function TaskIcon({ className = "", children }) {
  return (
    <div className={"flex h-[40px] w-[49px] shrink-0 items-center justify-center " + className}>
      <svg width="24" height="24" viewBox="0 0 24 24" fill="none">{children}</svg>
    </div>
  );
}

function Taskbar() {
  return (
    <div className="relative flex h-[40px] shrink-0 items-center bg-black text-[12px] text-white">
      <div className="flex w-[48px] shrink-0 items-center justify-center">
        <Svg w={16} h={16} stroke="none"><path d="M0 2.300L6.800 1.300v6.200H0zM7.700 1.200L16 0v7.500H7.700zM0 8.400h6.800v6.300L0 13.800zM7.700 8.400H16V16l-8.300-1.200z" fill="#fff" /></Svg>
      </div>
      <div className="flex h-full w-[344px] shrink-0 items-center border-t border-[#999] bg-[#f2f2f2] pl-[9px] text-[#333]">
        <Svg w={22} h={22}><circle cx="11" cy="10.500" r="9" stroke="#000" strokeWidth="2.600" /></Svg>
        <T w={128} className="ml-[9px] text-[14.500px]">Type here to search</T>
        <Svg w={14} h={18} className="mr-[14px] ml-auto" stroke="#222"><path d="M7 1c-3.300 0-2.500 1-2.500 9 0 2 5 2 5 0 0-8 .8-9-2.500-9zM2 8v3.500c0 3 10 3 10 0V8M7 14v3M4.500 17h5" /></Svg>
      </div>
      <div className="flex w-[47px] shrink-0 items-center justify-center">
        <Svg w={18} h={18} stroke="#fff"><path d="M1 5.500h10.500v7H1zM1 .5V3h10.500V.5M1 17.500V15h10.500v2.500M15.500 1v3M15.500 9v9" /><path d="M14.500 5h2.500v3h-2.500z" fill="#fff" stroke="none" /></Svg>
      </div>
      <TaskIcon className="ml-[3px]"><path d="M2 12C3 4.500 7 1.500 12.500 1.500 18.500 1.500 22 6 22 11v2.700H8.800c.3 6 8 6 11.700 3.300v4.500C13.500 25 5.500 22 5.300 14.500 5.300 11 7.500 8.500 10 7.300c-1 1.200-1.300 2.200-1.400 3.200h7.200c0-5.500-8.800-6-13.800 1.500z" fill="#0078d7" /></TaskIcon>
      <TaskIcon><path d="M1.500 2.500h7l1.500 2H22v15.500H1.500z" fill="#f9d774" /><path d="M1.500 6h20.500v14H1.500z" fill="#ffe598" /><path d="M5.500 13h13v9h-3.500v-4.500h-6V22H5.500z" fill="#3aa5dc" /><path d="M1.500 2.500h7V4h-7z" fill="#f3b93b" /></TaskIcon>
      <TaskIcon><path d="M8.500 7V4.500C8.500 1 15.500 1 15.500 4.500V7" stroke="#fff" strokeWidth="1.400" /><path d="M1 6h22l-1 17H2z" fill="#fff" /><path d="M7 9.500h4.500V14H7z" fill="#f25022" /><path d="M12.500 9.500H17V14h-4.500z" fill="#7fba00" /><path d="M7 15h4.500v4.500H7z" fill="#00a4ef" /><path d="M12.500 15H17v4.500h-4.500z" fill="#ffb900" /></TaskIcon>
      <TaskIcon><path d="M0 8L12 1.500 24 8v13.500H0z" fill="#fff" /><path d="M1.500 8h21l-9.500 5.500 3 3.500z" fill="#000" /></TaskIcon>
      <TaskIcon>
        <circle cx="12" cy="12" r="11.500" fill="#4caf50" />
        <path d="M12 12L2 6.200A11.500 11.500 0 0122 6.200h-10z" fill="#e33b2e" />
        <path d="M12 6.200h10A11.500 11.500 0 0112 23.500l5-8.500z" fill="#fcc934" />
        <path d="M2 6.200L7 15l5-3V6.200z" fill="#e33b2e" />
        <circle cx="12" cy="12" r="5.700" fill="#fff" /><circle cx="12" cy="12" r="4.500" fill="#3b7ded" />
      </TaskIcon>
      <TaskIcon><rect x="1" y="1" width="22" height="22" rx="2" fill="#205a85" /><path d="M1 12h22v11H1z" fill="#184767" /><path d="M4 6c4-2.500 8 0 10 4s3 7 6 8c-3 0-3 1-2 3-2-3-3-4-4-7M4 6c1 3 3 5 3 8s1 5 3 6c-1-3 0-4 1-4M16 4l4 4M18 3l3 3" stroke="#c9dce8" strokeWidth="1.200" /></TaskIcon>
      <TaskIcon><path d="M1.500 1.500h21v21h-21z" stroke="#fff" /><path d="M2 18L9 6.500l4 6.500 3-4 6 9v4H2z" fill="#fff" /></TaskIcon>
      <div className="flex h-[40px] w-[48px] shrink-0 flex-col items-center border-b-[3px] border-[#76b9ed] bg-[#333] pt-[8px]">
        <div className="flex h-[23px] w-[23px] items-center justify-center bg-[#f2f2f2]"><TableauLogo s={21} mono /></div>
      </div>
      <div className="absolute bottom-0 left-[741px] flex h-[3px] w-[40px] bg-[#76b9ed]"><div className="ml-auto w-[8px] bg-[#4b85b1]" /></div>
      <Svg w={16} h={18} className="ml-[222px]" stroke="#fff" strokeWidth="1.300"><circle cx="5.500" cy="8.500" r="3" /><path d="M1 17c0-6 9-6 9 0" /><circle cx="11" cy="4" r="2.700" /><path d="M9.500 9c3-2 6 0 6 4" /></Svg>
      <Svg w={14} h={14} className="ml-[21px]" stroke="#fff" strokeWidth="1.400"><path d="M1.500 10L7 4.500l5.500 5.500" /></Svg>
      <Svg w={18} h={16} className="ml-[8px]"><path d="M4 12.500h10c3 0 3.500-4.500 0-5-1-5-7-5-8-1.500-5 0-5 6-2 6.500z" fill="#777" stroke="none" /><path d="M1.500 1.500l14 13" stroke="#fff" /></Svg>
      <Svg w={17} h={16} className="ml-[7px]" stroke="#fff"><path d="M1 3.500h13v7H1z" /><path d="M2.500 5h7v4h-7z" fill="#fff" stroke="none" /><circle cx="12" cy="10" r="4.500" fill="#16913d" stroke="none" /><path d="M12 7.500v5M10.300 10l1.700-2.500 1.700 2.500" /></Svg>
      <Svg w={16} h={16} className="ml-[8px]" stroke="#ddd"><path d="M2 14C2 6 8 2 14 2M5 14.500C5 9 9 5 14.500 5M8 14.500c0-4 3-6.500 6.500-6.500M11 14.500c0-2 1.500-3.500 3.500-3.500" /></Svg>
      <Svg w={17} h={16} className="ml-[5px]" stroke="#fff"><path d="M1 5.500h3l4-3.500v12L4 10.500H1zM11 5.500l4 5M15 5.500l-4 5" /></Svg>
      <T w={24} className="ml-[11px] text-[12px]">ENG</T>
      <div className="ml-[6px] flex h-full w-[70px] shrink-0 flex-col items-center justify-center bg-[#1f1f1f] text-[12px] leading-[18px]">
        <T w={27}>01:02</T>
        <T w={58}>17-04-2023</T>
      </div>
      <Svg w={17} h={18} className="ml-[11px]" stroke="#fff"><path d="M1 2h15v11.500h-4.500L8.500 16.500v-3H1z" /></Svg>
      <div className="ml-auto h-full w-px bg-[#555]" />
      <div className="w-[4px] shrink-0" />
      <div className="absolute bottom-[41px] left-[1238px] flex h-[34px] w-[80px] flex-col items-start border border-[#767676] bg-white pt-px pl-[5px] text-[12px] leading-[15px] text-[#575757] shadow-[2px_2px_2px_rgba(0,0,0,0.35)]">
        <T w={67}>17 April 2023</T>
        <T w={44}>Monday</T>
      </div>
    </div>
  );
}

export default function App() {
  return (
    <div className="flex h-[768px] w-[1366px] flex-col overflow-hidden bg-[#f4f4f4] [font-family:'Open_Sans','Noto_Sans',sans-serif]">
      <TitleBar />
      <MenuBar />
      <Toolbar />
      <div className="flex h-[593px] shrink-0">
        <DataPane />
        <Cards />
        <Workspace />
      </div>
      <SheetTabs />
      <StatusBar />
      <Taskbar />
    </div>
  );
}
